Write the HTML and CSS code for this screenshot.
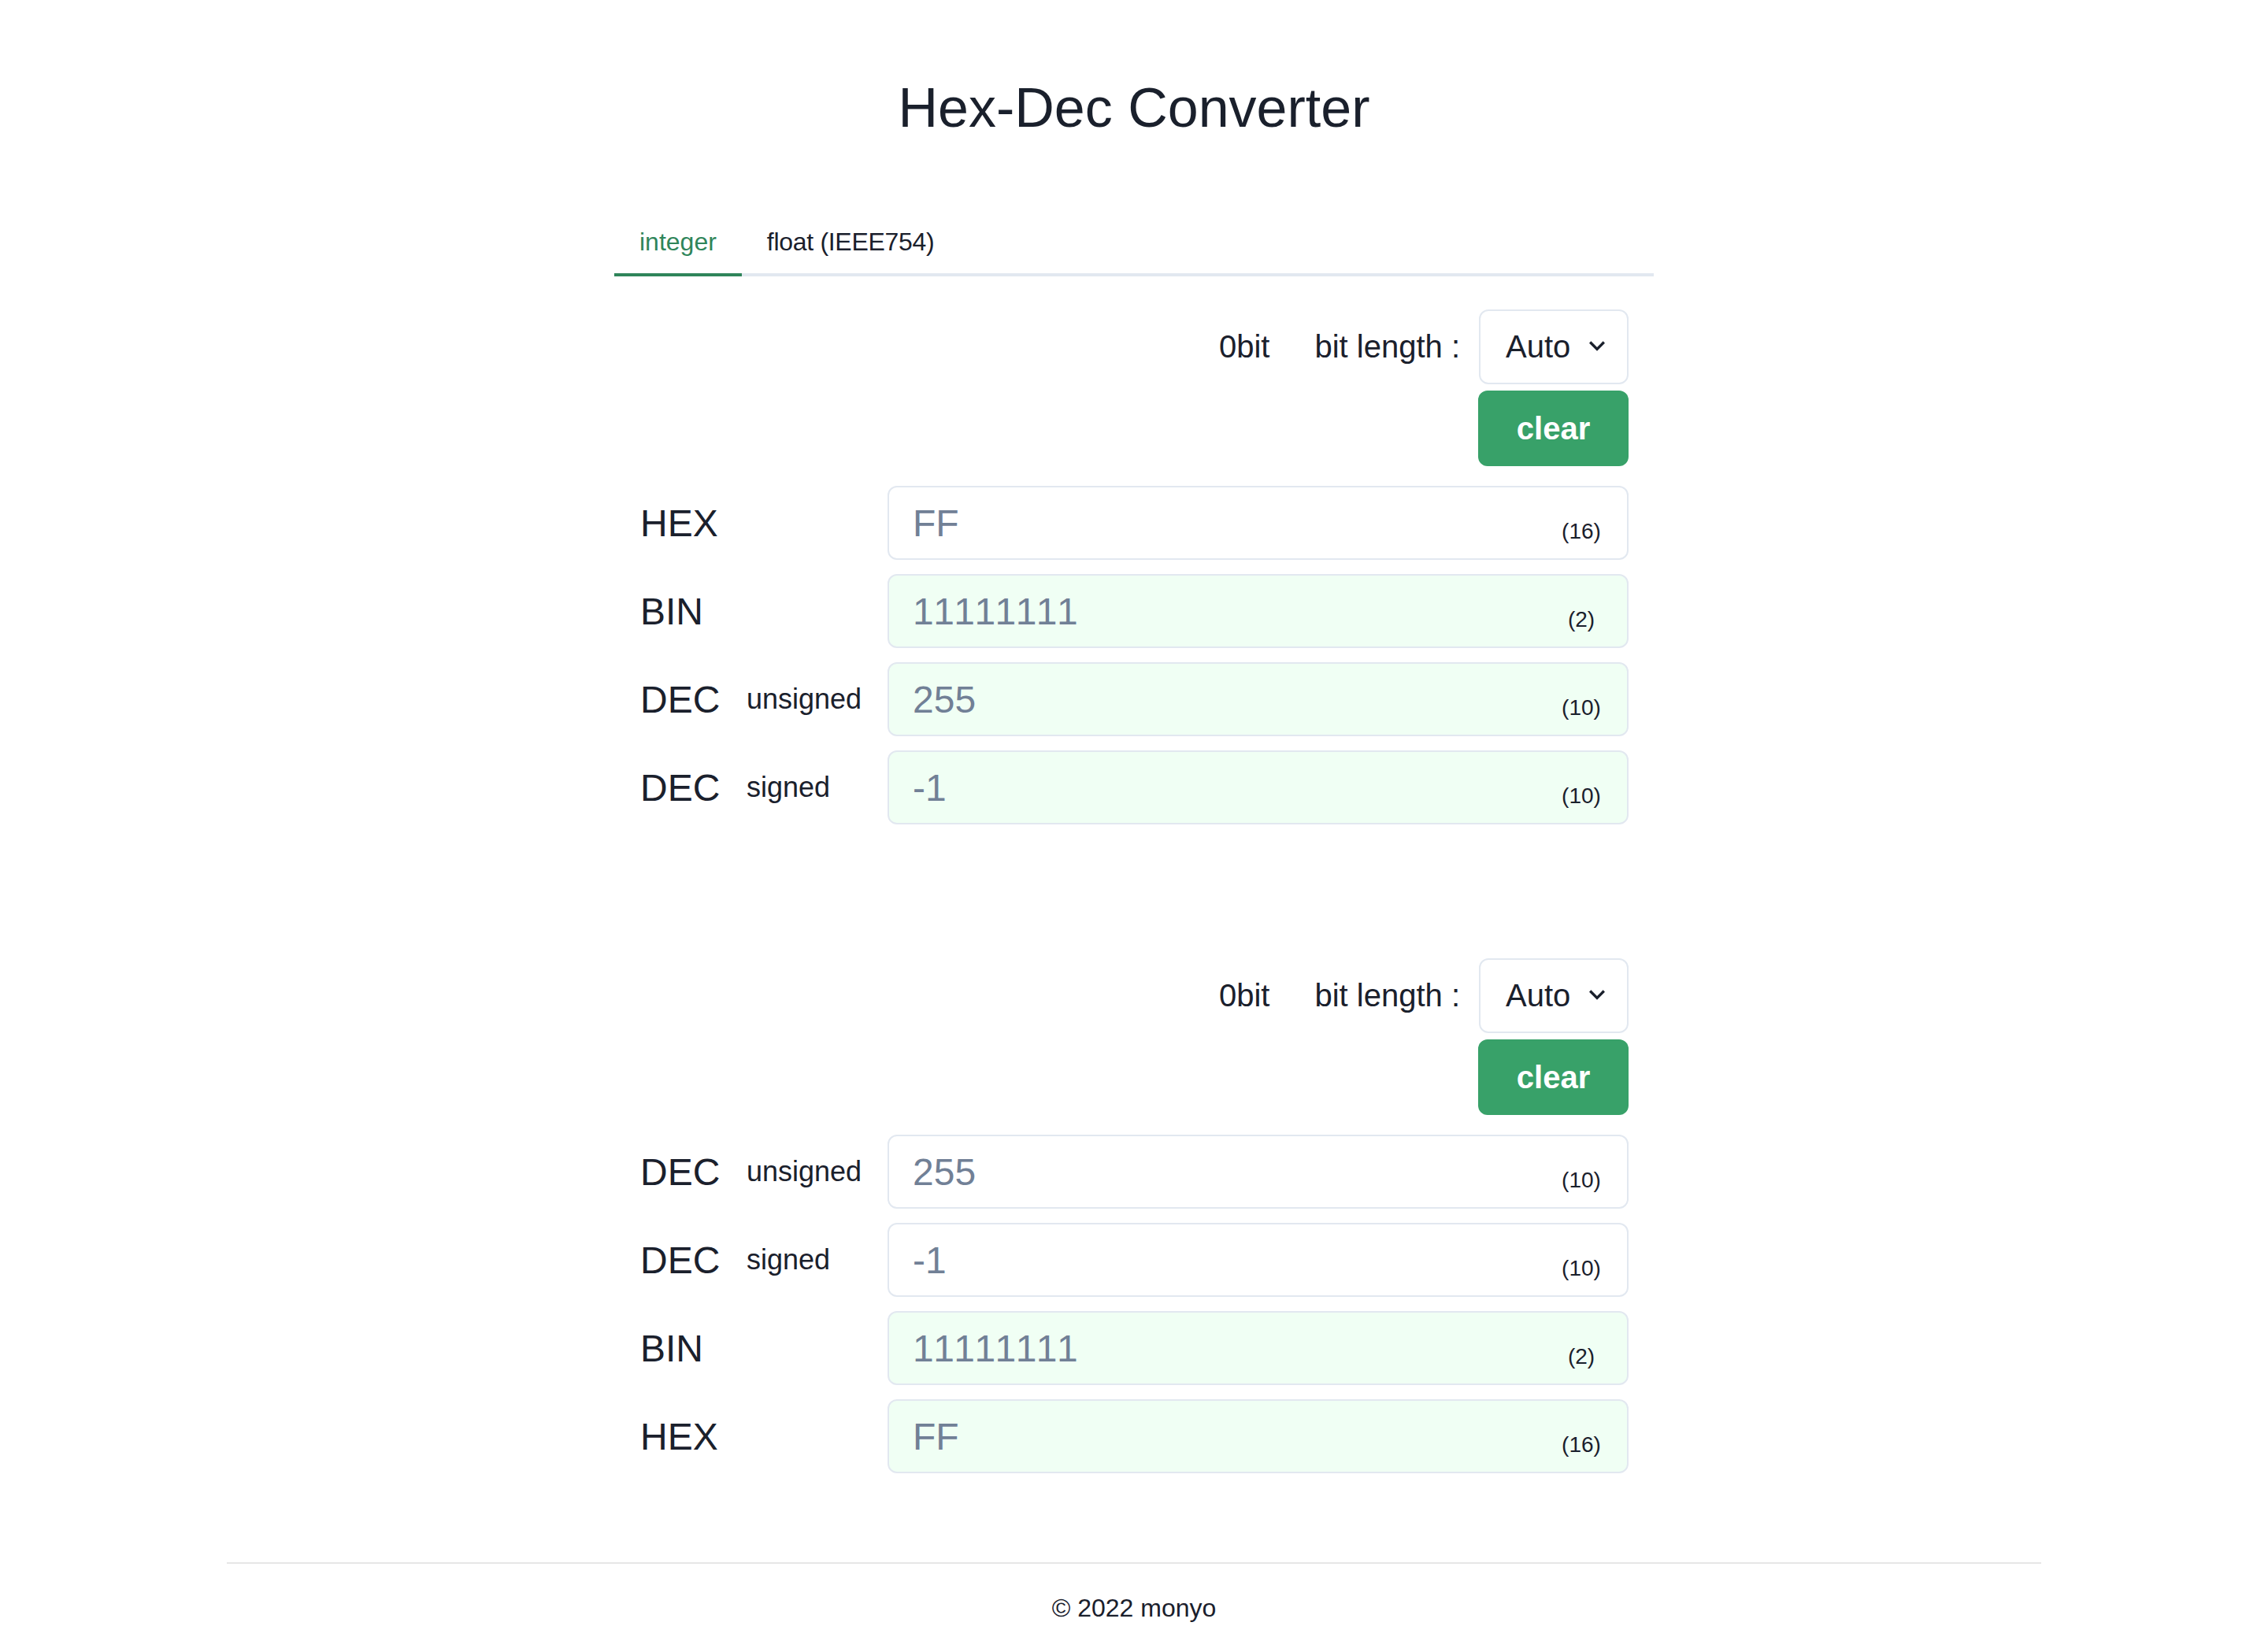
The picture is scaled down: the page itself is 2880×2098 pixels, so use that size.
FILE: index.html
```html
<!DOCTYPE html>
<html lang="en">
<head>
<meta charset="utf-8">
<title>Hex-Dec Converter</title>
<link rel="stylesheet" href="styles.css">
</head>
<body>
<main class="page">
  <h1 class="title">Hex-Dec Converter</h1>
  <div class="tabs">
    <div class="tablist">
      <div class="tab tab-active">integer</div>
      <div class="tab">float (IEEE754)</div>
    </div>
    <div class="panel">
      <section class="block">
        <div class="controls">
          <span class="bits">0bit</span>
          <span class="bitlen">bit length :</span>
          <div class="select"><span>Auto</span>
            <svg class="chev" viewBox="0 0 24 24" width="40" height="40"><path d="M16.59 8.59L12 13.17 7.41 8.59 6 10l6 6 6-6z" fill="currentColor"/></svg>
          </div>
        </div>
        <div class="btnrow"><div class="clear">clear</div></div>
        <div class="rows">
          <div class="row"><div class="label"><span class="lab">HEX</span></div><div class="field"><span class="val">FF</span><span class="suffix">(16)</span></div></div>
          <div class="row"><div class="label"><span class="lab">BIN</span></div><div class="field field-calc"><span class="val val-bin">11111111</span><span class="suffix">(2)</span></div></div>
          <div class="row"><div class="label"><span class="lab">DEC</span><span class="sub">unsigned</span></div><div class="field field-calc"><span class="val">255</span><span class="suffix">(10)</span></div></div>
          <div class="row"><div class="label"><span class="lab">DEC</span><span class="sub">signed</span></div><div class="field field-calc"><span class="val">-1</span><span class="suffix">(10)</span></div></div>
        </div>
      </section>
      <section class="block block-second">
        <div class="controls">
          <span class="bits">0bit</span>
          <span class="bitlen">bit length :</span>
          <div class="select"><span>Auto</span>
            <svg class="chev" viewBox="0 0 24 24" width="40" height="40"><path d="M16.59 8.59L12 13.17 7.41 8.59 6 10l6 6 6-6z" fill="currentColor"/></svg>
          </div>
        </div>
        <div class="btnrow"><div class="clear">clear</div></div>
        <div class="rows">
          <div class="row"><div class="label"><span class="lab">DEC</span><span class="sub">unsigned</span></div><div class="field"><span class="val">255</span><span class="suffix">(10)</span></div></div>
          <div class="row"><div class="label"><span class="lab">DEC</span><span class="sub">signed</span></div><div class="field"><span class="val">-1</span><span class="suffix">(10)</span></div></div>
          <div class="row"><div class="label"><span class="lab">BIN</span></div><div class="field field-calc"><span class="val val-bin">11111111</span><span class="suffix">(2)</span></div></div>
          <div class="row"><div class="label"><span class="lab">HEX</span></div><div class="field field-calc"><span class="val">FF</span><span class="suffix">(16)</span></div></div>
        </div>
      </section>
    </div>
  </div>
  <footer class="footer">
    <div class="footer-line"></div>
    <p class="copy">© 2022 monyo</p>
  </footer>
</main>
</body>
</html>
```

FILE: styles.css
```css
* { box-sizing: border-box; }
html, body { margin: 0; padding: 0; background: #ffffff; }
body {
  font-family: "Liberation Sans", Arial, Helvetica, sans-serif;
  color: #1A202C;
  overflow: hidden;
}
.page { display: flex; flex-direction: column; align-items: center; }
.title {
  margin: 95px 0 0;
  font-size: 70px;
  font-weight: 400;
  line-height: 84px;
  height: 84px;
  text-align: center;
  color: #1A202C;
}
.tabs { width: 1320px; margin-top: 88px; }
.tablist {
  display: flex;
  border-bottom: 4px solid #E2E8F0;
}
.tab {
  padding: 16px 32px;
  font-size: 32px;
  line-height: 48px;
  margin-bottom: -4px;
  border-bottom: 4px solid transparent;
  color: #1A202C;
}
.tab + .tab { letter-spacing: -0.3px; }
.tab-active { color: #2F855A; border-bottom-color: #2F855A; }
.panel { padding: 41px 32px 0 33px; }
.block-second { margin-top: 169px; }
.controls {
  display: flex;
  justify-content: flex-end;
  align-items: center;
  height: 96px;
}
.bits, .bitlen { font-size: 40px; line-height: 48px; }
.bits { margin-right: 57px; }
.bitlen { margin-right: 24px; }
.select {
  position: relative;
  width: 190px;
  height: 95px;
  border: 2px solid #E2E8F0;
  border-radius: 12px;
  display: flex;
  align-items: center;
  padding-left: 32px;
  font-size: 40px;
  color: #1A202C;
}
.chev {
  position: absolute;
  right: 18px;
  top: 50%;
  margin-top: -21px;
  color: #1A202C;
}
.btnrow { display: flex; justify-content: flex-end; margin-top: 8px; }
.clear {
  width: 191px;
  height: 96px;
  border-radius: 12px;
  background: #38A169;
  color: #ffffff;
  font-weight: 700;
  font-size: 40px;
  display: flex;
  align-items: center;
  justify-content: center;
}
.rows { display: flex; flex-direction: column; gap: 18px; margin-top: 25px; }
.row { display: grid; grid-template-columns: 314px 1fr; align-items: center; }
.label { display: flex; align-items: center; }
.lab { font-size: 48px; width: 101px; }
.sub { font-size: 36px; margin-left: 34px; }
.field {
  position: relative;
  height: 94px;
  border: 2px solid #E2E8F0;
  border-radius: 12px;
  background: #ffffff;
  display: flex;
  align-items: center;
  padding-left: 30px;
}
.field-calc { background: #F0FFF4; }
.val { font-size: 48px; color: #718096; }
.val-bin { letter-spacing: 3px; }
.suffix {
  position: absolute;
  right: 0;
  bottom: 13px;
  width: 116px;
  text-align: center;
  font-size: 28px;
  line-height: 42px;
  color: #1A202C;
}
.footer { width: 2304px; margin-top: 113px; }
.footer-line { height: 2px; background: #E6E6E6; }
.copy {
  margin: 32px 0 0;
  text-align: center;
  font-size: 32px;
  line-height: 48px;
  color: #1A202C;
}
```
